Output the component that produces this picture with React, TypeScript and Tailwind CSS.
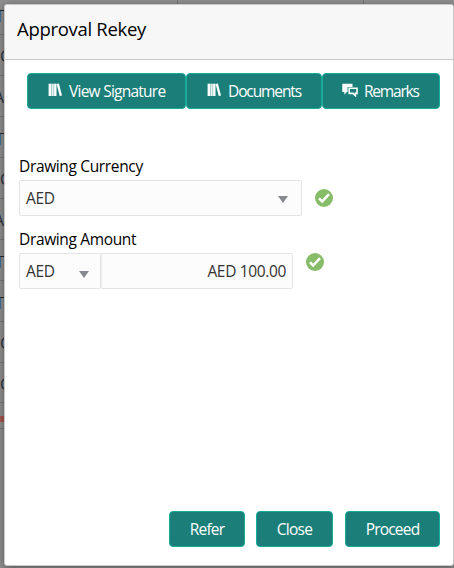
import React from "react";

const rows = [
  { glyph: "T", link: true, height: "h-[35px]", top: "pt-[10px]" },
  { glyph: "C", link: false, height: "h-[41px]", top: "pt-[13px]" },
  { glyph: "A", link: false, height: "h-[41px]", top: "pt-[13px]" },
  { glyph: "T", link: true, height: "h-[41px]", top: "pt-[16px]" },
  { glyph: "C", link: false, height: "h-[41px]", top: "pt-[13px]" },
  { glyph: "A", link: false, height: "h-[41px]", top: "pt-[13px]" },
  { glyph: "T", link: true, height: "h-[41px]", top: "pt-[16px]" },
  { glyph: "T", link: true, height: "h-[41px]", top: "pt-[16px]" },
  { glyph: "C", link: false, height: "h-[41px]", top: "pt-[13px]" },
  { glyph: "C", link: false, height: "h-[40px]", top: "pt-[13px]" },
];

function Backdrop() {
  return (
    <div aria-hidden="true" className="absolute inset-0 overflow-hidden bg-[#8f8f8f]">
      <div className="absolute left-[177px] top-0 h-1 w-px bg-[#777]" />
      <div className="absolute left-[363px] top-0 h-1 w-px bg-[#777]" />
      <div className="flex flex-col">
        {rows.map((row, i) => (
          <div key={i} className={`${row.height} ${row.top} flex shrink-0 items-start justify-between border-b border-[#777]`}>
            {row.link ? (
              <div className="h-3 w-1 border-t border-[#252a30]">
                <div className="h-[11px] w-px bg-[#3d7098]" />
              </div>
            ) : (
              <div className="h-4 w-4 text-[16px] leading-4 text-[#2b333d]">
                {row.glyph === "A" ? <span className="-ml-[6px]">A</span> : <span>C</span>}
              </div>
            )}
            <div className={i === 0 || !row.link ? "h-2 w-px" : "h-2 w-px bg-[#334f68]"} />
          </div>
        ))}
        <div className="mt-[13px] h-1.5 bg-[#a85650]" />
        <div className="mt-1.5 h-px bg-[#777]" />
      </div>
    </div>
  );
}

function Books() {
  return (
    <svg viewBox="0 0 14 14" className="h-[14px] w-[14px] shrink-0 -translate-y-[2px]" fill="white">
      <rect x="0.6" y="0.7" width="3" height="12.3" />
      <rect x="4.1" y="0.7" width="1.6" height="12.3" />
      <rect x="6.1" y="0.7" width="2.4" height="12.3" />
      <path d="M8.6 1.1 10.9.5 14 12.4 11.7 13Z" />
    </svg>
  );
}

function Chats() {
  return (
    <svg viewBox="0 0 16 14" className="h-[14px] w-4 shrink-0 -translate-y-[2px]">
      <path d="M.3.7H10.5V4H5.6V9H4.8L2.4 11.7V9H.3Z" fill="white" />
      <path d="M7.2 5.2H15V10.4H13.4V12.7L11 10.4H7.2Z" fill="none" stroke="white" strokeWidth="1.6" />
    </svg>
  );
}

function Check() {
  return (
    <svg viewBox="0 0 18 18" className="h-[18px] w-[18px] shrink-0">
      <circle cx="9" cy="9" r="9" fill="#87bd68" />
      <path d="M4 9.4 7.2 12.5 14 5.2" fill="none" stroke="white" strokeWidth="2.5" />
    </svg>
  );
}

function Caret({ className = "" }: { className?: string }) {
  return (
    <svg viewBox="0 0 10 7" className={`h-[7px] w-[10px] shrink-0 ${className}`}>
      <path d="M0 0H10L5 7Z" fill="#868990" />
    </svg>
  );
}

const button =
  "flex h-9 shrink-0 items-center rounded-[4px] border border-[#16ad9c] bg-[#1b7e79] pt-[2px] text-[15.5px] text-white";
const field = "flex h-9 items-center border border-[#e3e3e3] bg-[#fcfcfc] pt-[2px] text-[15.5px] tracking-[-0.35px] text-[#333]";
const label = "block h-[25px] text-[15.5px] leading-[23px] tracking-[-0.35px] text-black";

export default function App() {
  return (
    <div className="relative h-[568px] w-[454px] overflow-hidden pl-1 pt-1 font-['Open_Sans','Noto_Sans',sans-serif]">
      <Backdrop />
      <section
        role="dialog"
        aria-label="Approval Rekey"
        className="relative flex h-[562px] w-[450px] flex-col rounded-[3px] border border-[#c9c9c9] bg-white shadow-[0_2px_8px_rgba(0,0,0,0.4)]"
      >
        <header className="h-[55px] shrink-0 rounded-t-[2px] border-b border-[#c9c9c9] bg-[#f7f7f7] pl-3 pt-[10px]">
          <h1 className="text-[18.5px] leading-7 tracking-[-0.3px] text-black">Approval Rekey</h1>
        </header>
        <div className="mt-[13px] flex pl-[22px]">
          <button className={`${button} w-[159px] pl-5`}>
            <Books />
            <span className="ml-[7px] whitespace-nowrap tracking-[-0.75px]">View Signature</span>
          </button>
          <button className={`${button} w-[136px] pl-5`}>
            <Books />
            <span className="ml-[7px] whitespace-nowrap tracking-[-1.1px]">Documents</span>
          </button>
          <button className={`${button} w-[118px] pl-[19px]`}>
            <Chats />
            <span className="ml-1.5 whitespace-nowrap tracking-[-1.2px]">Remarks</span>
          </button>
        </div>
        <div className="mt-[46px] pl-[14px]">
          <label className={label}>Drawing Currency</label>
          <div className="flex items-center gap-[13px]">
            <div className={`${field} w-[283px] justify-between rounded-[2px] pl-[6px] pr-[13px]`}>
              <span>AED</span>
              <Caret />
            </div>
            <Check />
          </div>
        </div>
        <div className="mt-3 pl-[14px]">
          <label className={label}>Drawing Amount</label>
          <div className="flex items-start">
            <div className={`${field} w-[82px] justify-between rounded-[2px] pl-[6px] pr-[11px]`}>
              <span>AED</span>
              <Caret className="mt-[4px]" />
            </div>
            <div className={`${field} w-[192px] justify-end rounded-r-[2px] border-l-[#ededed] pr-[6px] tracking-[-0.25px]`}>AED 100.00</div>
            <div className="ml-[13px]">
              <Check />
            </div>
          </div>
        </div>
        <footer className="mb-[18px] mr-[13px] mt-auto flex justify-end">
          <button className={`${button} w-[76px] justify-center tracking-[-0.8px]`}>Refer</button>
          <button className={`${button} ml-[11px] w-[77px] justify-center tracking-[-0.7px]`}>Close</button>
          <button className={`${button} ml-3 w-[95px] justify-center tracking-[-0.8px]`}>Proceed</button>
        </footer>
      </section>
    </div>
  );
}
